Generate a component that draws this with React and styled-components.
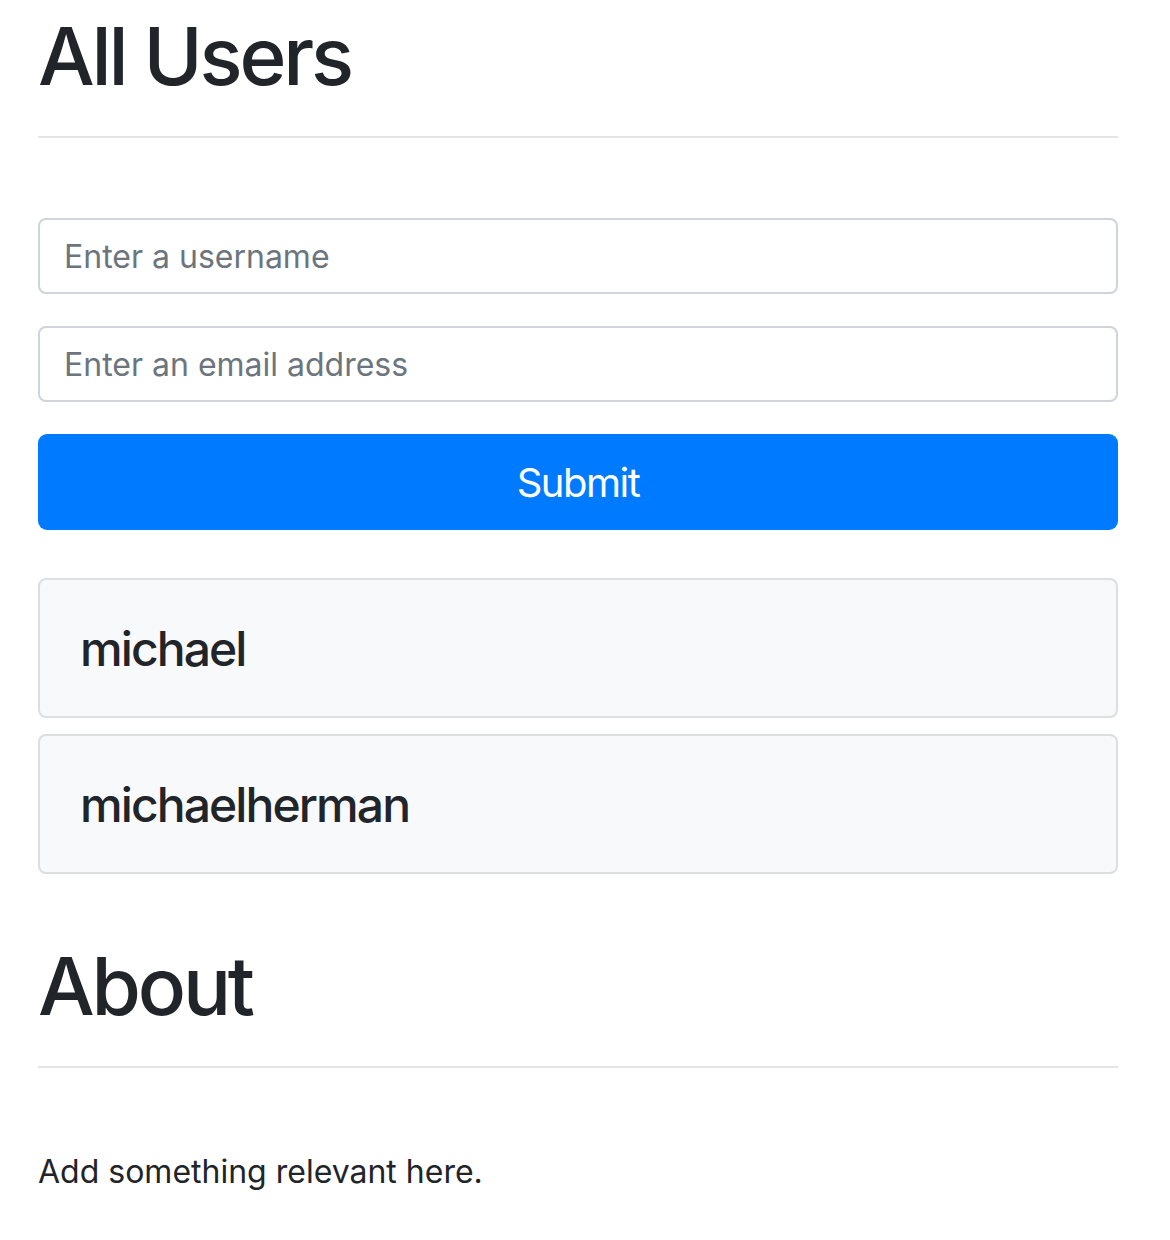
import React from "react";
import styled, { createGlobalStyle } from "styled-components";

const GlobalStyle = createGlobalStyle`
  body {
    margin: 0;
    background: #fff;
    color: #212529;
    font-family: Inter, "Noto Sans", "Liberation Sans", sans-serif;
  }
`;

const Page = styled.div`
  width: 1080px;
  padding: 8px 0 0 38px;
`;

const Title = styled.h1`
  margin: ${(p) => (p.$top ? p.$top : "0")} 0 0 0;
  font-size: 80px;
  line-height: 96px;
  font-weight: 500;
  letter-spacing: -3.2px;
`;

const Rule = styled.hr`
  margin: 32px 0 80px 0;
  border: 0;
  border-top: 2px solid rgba(0, 0, 0, 0.1);
`;

const Form = styled.form`
  display: flex;
  flex-direction: column;
  gap: 32px;
  margin-bottom: 48px;
`;

const Input = styled.input`
  box-sizing: border-box;
  width: 100%;
  height: 76px;
  padding: 0 24px;
  border: 2px solid #ced4da;
  border-radius: 8px;
  font-family: inherit;
  font-size: 32px;
  color: #495057;

  &::placeholder {
    color: #6c757d;
  }
`;

const Button = styled.button`
  height: 96px;
  border: 0;
  border-radius: 9px;
  background: #007bff;
  color: #fff;
  font-family: inherit;
  font-size: 40px;
  letter-spacing: -1.5px;
  cursor: pointer;
`;

const UserList = styled.div`
  display: flex;
  flex-direction: column;
  gap: 16px;
`;

const UserCard = styled.div`
  box-sizing: border-box;
  height: 140px;
  padding: 0 40px;
  display: flex;
  align-items: center;
  background: #f8f9fa;
  border: 2px solid #dcdfe2;
  border-radius: 8px;
  font-size: 48px;
  font-weight: 500;
  letter-spacing: -1.9px;
`;

const Text = styled.p`
  margin: 0;
  font-size: 32px;
  line-height: 48px;
`;

export default function App() {
  const users = ["michael", "michaelherman"];

  return (
    <Page>
      <GlobalStyle />
      <Title>All Users</Title>
      <Rule />
      <Form onSubmit={(e) => e.preventDefault()}>
        <Input placeholder="Enter a username" />
        <Input placeholder="Enter an email address" />
        <Button type="submit">Submit</Button>
      </Form>
      <UserList>
        {users.map((user) => (
          <UserCard key={user}>{user}</UserCard>
        ))}
      </UserList>
      <Title $top="64px">About</Title>
      <Rule />
      <Text>Add something relevant here.</Text>
    </Page>
  );
}
